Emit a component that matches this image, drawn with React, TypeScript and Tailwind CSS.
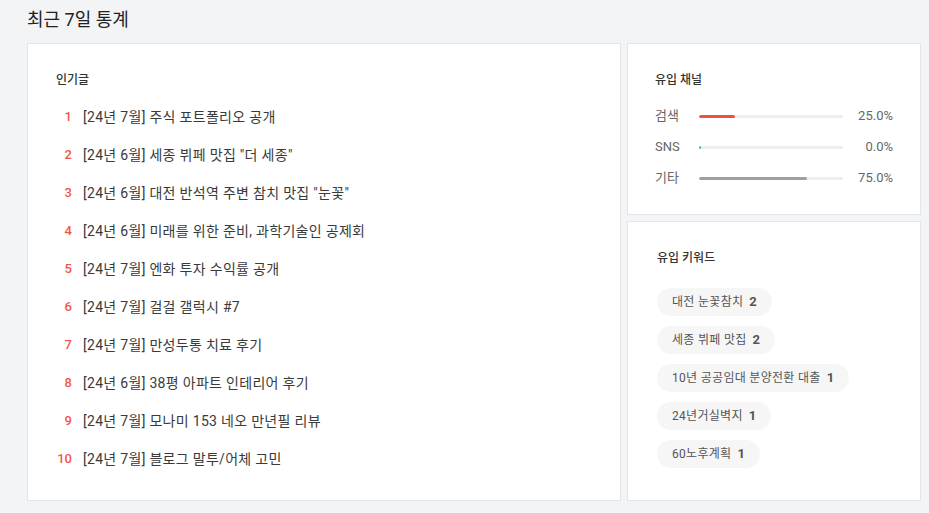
const posts = [
  "[24년 7월] 주식 포트폴리오 공개",
  '[24년 6월] 세종 뷔페 맛집 "더 세종"',
  '[24년 6월] 대전 반석역 주변 참치 맛집 "눈꽃"',
  "[24년 6월] 미래를 위한 준비, 과학기술인 공제회",
  "[24년 7월] 엔화 투자 수익률 공개",
  "[24년 7월] 걸걸 갤럭시 #7",
  "[24년 7월] 만성두통 치료 후기",
  "[24년 6월] 38평 아파트 인테리어 후기",
  "[24년 7월] 모나미 153 네오 만년필 리뷰",
  "[24년 7월] 블로그 말투/어체 고민",
];

const channels = [
  { label: "검색", pct: 25, color: "bg-[#f0513f]" },
  { label: "SNS", pct: 0, color: "bg-[#1cc7a5]" },
  { label: "기타", pct: 75, color: "bg-[#9aa0a8]" },
];

const keywords = [
  { word: "대전 눈꽃참치", count: 2 },
  { word: "세종 뷔페 맛집", count: 2 },
  { word: "10년 공공임대 분양전환 대출", count: 1 },
  { word: "24년거실벽지", count: 1 },
  { word: "60노후계획", count: 1 },
];

const font = { fontFamily: 'Roboto, "Noto Sans CJK KR", sans-serif' };

export default function App() {
  return (
    <div className="min-h-[513px] bg-[#f3f4f6] pl-[27px] pr-[8px] pb-[12px] text-[#333]" style={font}>
      <h1 className="pt-[7px] pb-[10px] text-[18px] leading-[26px] font-normal text-[#222]">최근 7일 통계</h1>

      <div className="flex gap-[6px]">
        {/* 인기글 */}
        <div className="w-[594px] h-[458px] bg-white border border-[#e3e5ea] px-[28px] pt-[27px]">
          <h2 className="text-[12px] leading-[18px] font-medium text-[#333] mb-[9px]">인기글</h2>
          <ul>
            {posts.map((p, i) => (
              <li key={i} className="flex items-center h-[38px]">
                <span className="w-[16px] text-right text-[13px] font-medium text-[#f2564a]">{i + 1}</span>
                <span className="ml-[11px] text-[14px] tracking-[0.3px] text-[#3a3a3a]">{p}</span>
              </li>
            ))}
          </ul>
        </div>

        <div className="w-[294px] flex flex-col gap-[6px]">
          {/* 유입 채널 */}
          <div className="bg-white border border-[#e3e5ea] px-[27px] pt-[27px] pb-[26px]">
            <h2 className="text-[12px] leading-[18px] font-medium text-[#333] mb-[17px]">유입 채널</h2>
            <div className="flex flex-col gap-[11px]">
              {channels.map((c) => (
                <div key={c.label} className="flex items-center h-[20px]">
                  <span className="w-[44px] text-[13px] text-[#666]">{c.label}</span>
                  <div className="w-[144px] h-[3px] bg-[#eeeeee] rounded-full overflow-hidden">
                    <div className={`h-full rounded-full ${c.color}`} style={{ width: c.pct === 0 ? "2px" : `${c.pct}%` }} />
                  </div>
                  <span className="flex-1 text-right text-[13px] text-[#666]">{c.pct.toFixed(1)}%</span>
                </div>
              ))}
            </div>
          </div>

          {/* 유입 키워드 */}
          <div className="flex-1 bg-white border border-[#e3e5ea] px-[29px] pt-[27px]">
            <h2 className="text-[12px] leading-[18px] font-medium text-[#333] mb-[21px]">유입 키워드</h2>
            <div className="flex flex-col items-start gap-[10px]">
              {keywords.map((k) => (
                <div key={k.word} className="h-[28px] px-[15px] rounded-full bg-[#f6f6f6] flex items-center gap-[6px]">
                  <span className="text-[12px] tracking-[0.3px] text-[#555]">{k.word}</span>
                  <span className="text-[13px] font-bold text-[#555]">{k.count}</span>
                </div>
              ))}
            </div>
          </div>
        </div>
      </div>
    </div>
  );
}
